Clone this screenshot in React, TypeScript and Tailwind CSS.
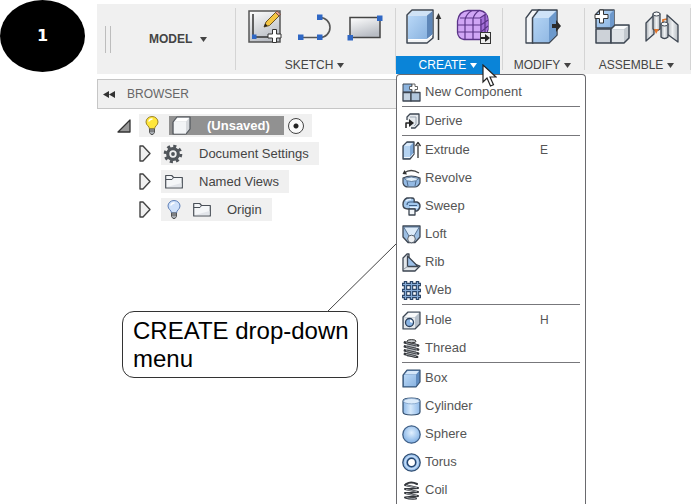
import React from "react";
import type { ReactNode } from "react";

function Gradients() {
  return (
    <svg className="absolute size-0" aria-hidden="true">
      <defs>
        <linearGradient id="blue" x1="0" y1="0" x2="1" y2="1">
          <stop offset="0" stopColor="#b9d8f7" />
          <stop offset="1" stopColor="#8ab3e0" />
        </linearGradient>
        <linearGradient id="sheet" x1="0" y1="0" x2="0.4" y2="1">
          <stop offset="0" stopColor="#ffffff" />
          <stop offset="1" stopColor="#b9bdc4" />
        </linearGradient>
        <linearGradient id="steel" x1="0" y1="0" x2="1" y2="0">
          <stop offset="0" stopColor="#aab0b6" />
          <stop offset="0.5" stopColor="#eef0f2" />
          <stop offset="1" stopColor="#b4bac0" />
        </linearGradient>
        <linearGradient id="tube" x1="0" y1="0" x2="1" y2="0">
          <stop offset="0" stopColor="#8db8e8" />
          <stop offset="0.45" stopColor="#d6e9fb" />
          <stop offset="1" stopColor="#8db8e8" />
        </linearGradient>
        <radialGradient id="ball" cx="0.5" cy="0.4" r="0.55">
          <stop offset="0" stopColor="#e2f1ff" />
          <stop offset="1" stopColor="#86b4e6" />
        </radialGradient>
      </defs>
    </svg>
  );
}

function Drawing({ size, children }: { size: "lg" | "sm"; children: ReactNode }) {
  return size === "lg" ? (
    <svg viewBox="0 0 36 36" className="size-9 shrink-0" fill="none" aria-hidden="true">
      {children}
    </svg>
  ) : (
    <svg viewBox="0 0 19 19" className="size-[19px] shrink-0" fill="none" strokeLinejoin="round" aria-hidden="true">
      {children}
    </svg>
  );
}

const ink = "#3d4652";

/* ---------- toolbar drawings ---------- */

const newSketch = (
  <Drawing size="lg">
    <rect x="2" y="2" width="31" height="31" fill="url(#sheet)" stroke="#555" strokeWidth="1.5" />
    <path d="M6 5v23h17" stroke="#333" strokeWidth="1.5" />
    <rect x="5" y="25.500" width="4.500" height="4.500" fill="#2f67c4" />
    <path d="M17 18l2-5L29 3l3.500 3.500-10 10z" fill="#f4c542" stroke="#6b5320" strokeLinejoin="round" />
    <path d="M28.500 3.500l1.500-1.500 3.500 3-1.500 2z" fill="#e7a08e" stroke="#7a5044" />
    <path d="M17 18l1.200-3.600 2.400 2.400z" fill="#222" />
    <path d="M25.500 20.500h4V25H34v4h-4.500v4.500h-4V29H21v-4h4.500z" fill="#fff" stroke="#333" />
  </Drawing>
);

const arcSketch = (
  <Drawing size="lg">
    <path d="M4 28.500h19A10 10 0 0 0 23 8.500" stroke="#555" strokeWidth="1.600" />
    <rect x="1" y="25.500" width="5.500" height="5.500" fill="#2f67c4" />
    <rect x="20" y="25.500" width="5.500" height="5.500" fill="#2f67c4" />
    <rect x="20" y="5.500" width="5.500" height="5.500" fill="#2f67c4" />
  </Drawing>
);

const rectSketch = (
  <Drawing size="lg">
    <rect x="3" y="8.500" width="30" height="20" fill="url(#sheet)" stroke="#444" strokeWidth="1.500" />
    <rect x="0.500" y="26" width="5.500" height="5.500" fill="#2f67c4" />
    <rect x="30" y="6.500" width="5.500" height="5.500" fill="#2f67c4" />
  </Drawing>
);

const extrudeLarge = (
  <Drawing size="lg">
    <path d="M1 34V6l5-5h21v28l-6 5z" fill="#f2f4f6" stroke={ink} strokeWidth="1.500" strokeLinejoin="round" />
    <path d="M2 30V6.500h19V30z" fill="url(#blue)" />
    <path d="M2 6.500L6.500 2H26l-5 4.500z" fill="#cfe2f5" />
    <path d="M21 6.500L26.500 2v23.500L21 30z" fill="#5d86b8" />
    <path d="M2 30.500h19l5.500-4.500" stroke="#fff" />
    <path d="M32.500 31V7" stroke="#333" strokeWidth="1.500" />
    <path d="M32.500 4l2.800 6h-5.600z" fill="#333" />
  </Drawing>
);

const formLarge = (
  <Drawing size="lg">
    <path d="M1.500 12Q3 2 12 1.500h12q7 1 8 9v10q-1 6-7 10H8q-6-1-6.500-7z" fill="#d0a5f5" stroke="#5b3488" strokeWidth="1.300" />
    <path d="M24 9l6-5 2 7v9l-8 10z" fill="#a470d8" />
    <path d="M1.500 16H25l7-5M1.500 23H25l7-6M4 9h20l6-4M9 30.500V11q1-6 7-9.500M17 30.500V10q1-5 6-8.500M25 30V10M29 27V6" stroke="#5b3488" strokeWidth="1.200" />
    <rect x="24.500" y="23.500" width="10" height="11" fill="#eee" stroke="#333" />
    <path d="M25 28h4v-3l5 4-5 4v-3h-4z" fill="#222" />
  </Drawing>
);

const pressPull = (
  <Drawing size="lg">
    <path d="M1 34V9l6-8h8L8 9v25z" fill="#f4f6f8" stroke={ink} strokeWidth="1.300" strokeLinejoin="round" />
    <path d="M7.500 34V9l6-8H32v25l-8 8z" fill="url(#blue)" stroke={ink} strokeWidth="1.500" strokeLinejoin="round" />
    <path d="M8.500 9L14 2h17l-7 7z" fill="#cfe3f8" />
    <path d="M24 9l7.300-7v24L24 33z" fill="#6c99cc" />
    <path d="M27 15h4v-4l5 6-5 6v-4h-4z" fill="#2b2b2b" />
  </Drawing>
);

const newComponentLarge = (
  <Drawing size="lg">
    <path d="M2 19V5l4-4h14v18z" fill="url(#blue)" stroke={ink} strokeWidth="1.500" strokeLinejoin="round" />
    <path d="M16 5l4-4v17h-4z" fill="#6d98cb" />
    <path d="M2 20h15v14H2z" fill="#cdd2d8" stroke={ink} strokeWidth="1.500" strokeLinejoin="round" />
    <path d="M17 20l4-4h14v13l-5 5H17z" fill="#c3c9cf" stroke={ink} strokeWidth="1.500" strokeLinejoin="round" />
    <path d="M18 20.500h12V33H18z" fill="#e0e4e8" />
    <path d="M18.500 20l3-3h12.500l-4 3z" fill="#fafbfc" />
    <path d="M5.500 1h4v4.500H14v4H9.500V14h-4V9.500H1v-4h4.500z" fill="#fff" stroke="#333" />
  </Drawing>
);

const jointLarge = (
  <Drawing size="lg">
    <path d="M2 14l8-8v19l-8 7z" fill="url(#steel)" stroke={ink} strokeWidth="1.300" strokeLinejoin="round" />
    <path d="M9 5q3.500-3 7 0v15q-3.500 3-7 0z" fill="url(#steel)" stroke={ink} strokeWidth="1.300" />
    <ellipse cx="12.500" cy="5" rx="3.500" ry="2" fill="#f6f7f8" stroke={ink} />
    <path d="M10 20h5l-3 5z" fill="#e2762c" />
    <path d="M19 16v-5l4-1" stroke="#e2762c" strokeWidth="1.800" />
    <path d="M23 6l11 10v17l-11-8z" fill="url(#steel)" stroke={ink} strokeWidth="1.300" strokeLinejoin="round" />
    <path d="M17 15q3.500-3 7 0v13q-3.500 3-7 0z" fill="url(#steel)" stroke={ink} strokeWidth="1.300" />
    <ellipse cx="20.500" cy="15" rx="3.500" ry="2" fill="#f6f7f8" stroke={ink} />
  </Drawing>
);

/* ---------- menu drawings ---------- */

const newComponent = (
  <Drawing size="sm">
    <path d="M1 1h9v8H1z" fill="#8db4de" stroke={ink} />
    <path d="M1 9.500h8v8.500H1z" fill="#c4d3e2" stroke={ink} strokeWidth="1.300" />
    <path d="M9 9.500h9V18H9z" fill="#b0c6dd" stroke={ink} strokeWidth="1.300" />
    <path d="M10 1h3v2.500h2.500v3H13V9h-3V6.500H7.500v-3H10z" fill="#fff" stroke="#555" strokeWidth="0.900" />
  </Drawing>
);

const derive = (
  <Drawing size="sm">
    <path d="M5 8V5l3-3h9v10l-4 4H9" fill="#e6eaee" stroke={ink} strokeWidth="1.300" />
    <path d="M8 5h6v7l-2 2" stroke="#9aa5b2" />
    <path d="M4 16v-5h3" stroke="#222" strokeWidth="1.500" />
    <path d="M7 7l5 4-5 4z" fill="#222" />
  </Drawing>
);

const extrude = (
  <Drawing size="sm">
    <path d="M1 18V5l4-4h7v12l-4 5H1z" fill="#7fa8d6" stroke={ink} strokeWidth="1.300" />
    <path d="M2 5h6v11H2z" fill="#b5d3f1" />
    <path d="M2 5l3-3h6L8 5z" fill="#dcecfb" />
    <path d="M2 16.500h6l3.500-4" stroke="#f2f6fa" />
    <path d="M16 17V4" stroke="#333" strokeWidth="1.300" />
    <path d="M13.500 5L16 1.500 18.500 5" stroke="#333" strokeWidth="1.300" />
  </Drawing>
);

const revolve = (
  <Drawing size="sm">
    <path d="M2 4Q9-1 17 4" stroke="#444" strokeWidth="1.400" />
    <path d="M0.500 5l4.500 0.500L2.500 1z" fill="#333" />
    <path d="M1 9q8-4 17 0v5q-2 4-5 4H6q-4 0-5-4z" fill="#94bae4" stroke={ink} strokeWidth="1.200" />
    <path d="M2 9.500q7-3 15 0-3 3-7.500 3T2 9.500z" fill="#e0effc" stroke="#4e6b8d" strokeWidth="0.800" />
    <path d="M5 12l1 5M14 12l-1 5" stroke="#4e6b8d" />
  </Drawing>
);

const sweep = (
  <Drawing size="sm">
    <path d="M5 1h5q3 0 2 4h3q3 1 3 4t-3 5h-2v-2H6Q1 12 1 7.500T5 1z" fill="#a3c8ed" stroke={ink} strokeWidth="1.400" />
    <path d="M12 5H8Q5 5 5 8M7 8.500h8" stroke="#3f5f86" strokeWidth="1.100" />
    <path d="M4 4q2-2 5-1.500M8 10.500h8" stroke="#e4f1ff" strokeWidth="1.500" />
    <path d="M7 12h6v6H7z" fill="#f1f5f9" stroke={ink} strokeWidth="1.300" />
  </Drawing>
);

const loft = (
  <Drawing size="sm">
    <path d="M1 1h17v11l-5 5.500H6L1 12z" fill="#9dbfe3" stroke={ink} strokeWidth="1.300" />
    <path d="M1.700 2h15.600L12 11H7z" fill="#dcebf9" stroke="#4e6b8d" strokeWidth="0.900" />
    <circle cx="9.500" cy="14" r="3.800" fill="#eceff2" stroke="#59626d" />
  </Drawing>
);

const rib = (
  <Drawing size="sm">
    <path d="M1 18V5l4-4h2v8l11 4-5 5z" fill="#e3e7eb" stroke={ink} strokeWidth="1.300" />
    <path d="M5.500 3v10.500H16z" fill="#9cc0e8" stroke={ink} strokeWidth="1.300" />
    <path d="M2 16l3.500-2.500" stroke="#8d97a2" />
  </Drawing>
);

const web = (
  <Drawing size="sm">
    <path d="M3.500 0v19M9.500 0v19M15.500 0v19M0 3.500h19M0 9.500h19M0 15.500h19" stroke="#2c4668" strokeWidth="3.400" />
    <path d="M3.500 1v17M9.500 1v17M15.500 1v17M1 3.500h17M1 9.500h17M1 15.500h17" stroke="#86abd6" strokeWidth="1.200" />
  </Drawing>
);

const hole = (
  <Drawing size="sm">
    <path d="M1 18V6l5-5h12v12l-5 5z" fill="#b5bfca" stroke={ink} strokeWidth="1.200" />
    <path d="M2 6.500h11V17H2z" fill="#e5e9ed" />
    <path d="M2.500 6L6.500 2h10.500l-4 4z" fill="#f8f9fa" />
    <circle cx="7.500" cy="11.500" r="4" fill="#8ab5e5" stroke="#2c3f58" strokeWidth="1.300" />
    <path d="M8 8.500a3 3 0 012.500 3.500L8 11z" fill="#fff" />
  </Drawing>
);

const thread = (
  <Drawing size="sm">
    <path d="M5 2h9v16H5z" fill="#b7bbc0" />
    <path d="M3 3.500l13 3M3 7.500l13 3M3 11.500l13 3M3 15l12 3" stroke="#34373c" strokeWidth="2.800" strokeLinecap="round" />
    <path d="M4 3.700l11 2.600M4 7.700l11 2.600M4 11.700l11 2.600M4 15.200l10 2.500" stroke="#a3a7ac" strokeWidth="0.900" />
    <ellipse cx="9.500" cy="2.200" rx="4.500" ry="1.600" fill="#c4c8cc" stroke="#333" />
  </Drawing>
);

const box = (
  <Drawing size="sm">
    <path d="M1 18V6l4-5h13v12l-4 5z" fill="#608cc0" stroke="#35506f" strokeWidth="1.200" />
    <path d="M2 6h12v11H2z" fill="url(#blue)" />
    <path d="M2.500 5.500L5.500 2h11.500L14 5.500z" fill="#d5e7f9" />
  </Drawing>
);

const cylinder = (
  <Drawing size="sm">
    <path d="M1 4q0-3 8.500-3T18 4v11q0 3-8.500 3T1 15z" fill="url(#tube)" stroke="#35506f" strokeWidth="1.200" />
    <ellipse cx="9.500" cy="4.200" rx="8" ry="2.700" fill="#dcebfa" stroke="#7d9fc6" strokeWidth="0.800" />
  </Drawing>
);

const sphere = (
  <Drawing size="sm">
    <circle cx="9.500" cy="9.500" r="8.700" fill="url(#ball)" stroke="#3f5f86" strokeWidth="1.300" />
  </Drawing>
);

const torus = (
  <Drawing size="sm">
    <circle cx="9.500" cy="9.500" r="8.700" fill="#94bdeb" stroke="#2f4c70" strokeWidth="1.300" />
    <circle cx="9.500" cy="9.500" r="6.300" stroke="#c2dbf6" strokeWidth="1.500" />
    <circle cx="9.500" cy="9.500" r="4.200" fill="#fff" stroke="#24456f" strokeWidth="1.500" />
  </Drawing>
);

const coil = (
  <Drawing size="sm">
    <path d="M4 3q5-3 11 0M3 4l13 3M16 7L3 8M3 8l13 3M16 11L3 12M3 12l13 3M16 15L3 16.500q5 1.500 11 1" stroke="#34373c" strokeWidth="2" strokeLinecap="round" />
    <path d="M4 4.300l11 2.500M4 8.300l11 2.500M4 12.300l11 2.500M4.500 16.500q4 1 9 1" stroke="#b7bbc0" strokeWidth="0.800" />
  </Drawing>
);

/* ---------- tree drawings ---------- */

function Bulb({ lit }: { lit: boolean }) {
  return (
    <svg viewBox="0 0 14 19" className="h-[19px] w-3.5 shrink-0" fill="none" aria-hidden="true">
      <path d="M4.500 13C4.500 10 1 9.500 1 6a6 5.500 0 0112 0c0 3.500-3.500 4-3.500 7z" fill={lit ? "#ffe63b" : "#cfe1fa"} stroke={lit ? "#9c8428" : "#5f80b8"} />
      <path d="M4 5q1-2 3-2" stroke="#fff" strokeWidth="1.500" strokeLinecap="round" />
      <path d="M4.500 13h5v3.500L8 18.500H6l-1.500-2z" fill="#a8adb3" stroke="#555" />
      <path d="M4.500 15h5" stroke="#555" />
    </svg>
  );
}

function Folder() {
  return (
    <svg viewBox="0 0 18 15" className="h-[15px] w-[18px] shrink-0" fill="none" aria-hidden="true">
      <path d="M0.700 14V1.500h6L8.500 3.500h8.800V14z" fill="#f4f6f8" stroke="#4a5058" strokeWidth="1.200" strokeLinejoin="round" />
      <path d="M1 5.500h6l1.500-2" stroke="#4a5058" />
      <path d="M2 13h14.500V9z" fill="#e2e5ea" />
    </svg>
  );
}

function Gear() {
  return (
    <svg viewBox="-10 -10 20 20" className="size-5 shrink-0" fill="none" aria-hidden="true">
      <circle r="7.800" stroke="#50555a" strokeWidth="3" strokeDasharray="3.063 3.063" />
      <circle r="5.300" stroke="#50555a" strokeWidth="3.200" />
      <circle r="1.900" fill="#50555a" />
    </svg>
  );
}

function Cube() {
  return (
    <svg viewBox="0 0 19 19" className="size-[19px] shrink-0" fill="none" aria-hidden="true">
      <path d="M1 18V6l4-5h13v12l-4 5z" fill="#d5d8dc" stroke="#50555b" strokeLinejoin="round" strokeWidth="1.200" />
      <path d="M2 6h12v11.500H2z" fill="#f2f4f6" />
      <path d="M2.500 5.500L5.500 2h11.500L14 5.500z" fill="#fff" />
    </svg>
  );
}

function Expander({ label }: { label: string }) {
  return (
    <button aria-label={`Expand ${label}`} aria-expanded="false" className="w-3 shrink-0">
      <svg viewBox="0 0 12 17" className="h-[17px] w-3" aria-hidden="true">
        <path d="M1 1h3l7 7.500L4 16H1z" fill="#f0f0f0" stroke="#444" strokeWidth="1.400" strokeLinejoin="round" />
      </svg>
    </button>
  );
}

/* ---------- layout ---------- */

function Caret() {
  return (
    <svg viewBox="0 0 7 5" className="h-[5px] w-[7px]" fill="currentColor" aria-hidden="true">
      <path d="M0 0h7L3.500 5z" />
    </svg>
  );
}

type Tool = { label: string; icon: ReactNode };

function ToolGroup({ name, tools, width, open, children }: { name: string; tools: Tool[]; width: string; open?: boolean; children?: ReactNode }) {
  return (
    <section className={`relative flex shrink-0 flex-col justify-between ${width}`}>
      <span className="absolute top-1 bottom-1 left-0 w-px bg-[#d4d4d4]" />
      <div className="flex justify-center gap-3.5 pt-[5px]">
        {tools.map((t) => (
          <button key={t.label} aria-label={t.label}>
            {t.icon}
          </button>
        ))}
      </div>
      <button
        aria-haspopup="menu"
        aria-expanded={!!open}
        className={`mr-0.5 ml-px flex h-[18px] items-center justify-center gap-1 text-xs ${open ? "bg-[#0a84d8] text-white" : "text-[#444]"}`}
      >
        {name}
        <Caret />
      </button>
      {children}
    </section>
  );
}

type Item = { label: string; icon: ReactNode; shortcut?: string };

const menuGroups: Item[][] = [
  [{ label: "New Component", icon: newComponent }],
  [{ label: "Derive", icon: derive }],
  [
    { label: "Extrude", icon: extrude, shortcut: "E" },
    { label: "Revolve", icon: revolve },
    { label: "Sweep", icon: sweep },
    { label: "Loft", icon: loft },
    { label: "Rib", icon: rib },
    { label: "Web", icon: web },
  ],
  [
    { label: "Hole", icon: hole, shortcut: "H" },
    { label: "Thread", icon: thread },
  ],
  [
    { label: "Box", icon: box },
    { label: "Cylinder", icon: cylinder },
    { label: "Sphere", icon: sphere },
    { label: "Torus", icon: torus },
    { label: "Coil", icon: coil },
  ],
];

function CreateMenu() {
  return (
    <div role="menu" className="absolute top-full left-px z-10 w-[190px] rounded-t border border-b-0 border-[#6a6a6e] bg-white px-[5px] pt-[3px] text-[13px] text-[#555]">
      {menuGroups.map((group, i) => (
        <div key={i} role="group" className={i === 0 ? "" : i > 2 ? "border-t border-[#77777b] pt-px" : "border-t border-[#77777b]"}>
          {group.map((item) => (
            <button key={item.label} role="menuitem" className="flex h-7 w-full items-center gap-1 text-left">
              {item.icon}
              <span className="flex-1">{item.label}</span>
              {item.shortcut && <kbd className="w-10 font-[inherit] text-xs">{item.shortcut}</kbd>}
            </button>
          ))}
        </div>
      ))}
    </div>
  );
}

function Pointer() {
  return (
    <svg viewBox="0 0 15 24" className="absolute top-[60px] left-[87px] z-20 h-6 w-[15px]" aria-hidden="true">
      <path d="M1 1v17l4-4 3.500 8 3-1.300L8 13h6z" fill="#fff" stroke="#222" strokeWidth="1.200" />
    </svg>
  );
}

function TreeRow({ label, children }: { label: string; children: ReactNode }) {
  return (
    <li className="flex h-[23px] items-center gap-2.5 pl-[22px]">
      <Expander label={label} />
      <div className="flex h-full items-center bg-[#f0f0f0] pr-2.5">
        {children}
        <span>{label}</span>
      </div>
    </li>
  );
}

export default function App() {
  return (
    <div className="flex min-h-screen bg-white font-['Liberation_Sans',Arial,sans-serif]">
      <Gradients />
      <aside className="w-[97px] shrink-0">
        <div className="flex h-[72px] w-[85px] items-center justify-center rounded-[50%] bg-black font-['DejaVu_Sans',sans-serif] text-base font-bold text-white">1</div>
      </aside>

      <div className="min-w-0 flex-1 pt-1">
        <header className="flex h-[70px] bg-[#f0f0f0]">
          <div className="flex w-[138px] shrink-0 items-center pl-2">
            <span className="h-[27px] w-1.5 border-x border-[#bdbdbd]" />
            <button className="ml-[38px] flex items-center gap-2 text-xs font-bold text-[#444]">
              MODEL
              <Caret />
            </button>
          </div>
          <ToolGroup
            name="SKETCH"
            width="w-40"
            tools={[
              { label: "Create sketch", icon: newSketch },
              { label: "Line", icon: arcSketch },
              { label: "Rectangle", icon: rectSketch },
            ]}
          />
          <ToolGroup
            name="CREATE"
            width="w-[107px]"
            open
            tools={[
              { label: "Extrude", icon: extrudeLarge },
              { label: "Create form", icon: formLarge },
            ]}
          >
            <CreateMenu />
            <Pointer />
          </ToolGroup>
          <ToolGroup name="MODIFY" width="w-[82px]" tools={[{ label: "Press pull", icon: pressPull }]} />
          <ToolGroup
            name="ASSEMBLE"
            width="w-[106px]"
            tools={[
              { label: "New component", icon: newComponentLarge },
              { label: "Joint", icon: jointLarge },
            ]}
          />
          <span className="my-1 w-px bg-[#d4d4d4]" />
        </header>

        <main className="mt-[5px] w-[300px] text-[13px] text-[#444]">
          <h2 className="flex h-[30px] items-center gap-3 border border-[#c6c6c6] bg-[#f0f0f0] pl-[5px] text-xs text-[#666]">
            <button aria-label="Collapse browser">
              <svg viewBox="0 0 12 7" className="h-[7px] w-3" fill="#333" aria-hidden="true">
                <path d="M6 0v7L0 3.500zM12 0v7L6 3.500z" />
              </svg>
            </button>
            BROWSER
          </h2>

          <ul className="mt-[5px] flex flex-col gap-[5px] pl-5">
            <li className="flex h-[23px] items-center gap-2">
              <button aria-label="Collapse (Unsaved)" aria-expanded="true">
                <svg viewBox="0 0 14 14" className="size-3.5" aria-hidden="true">
                  <path d="M13 1v12H1z" fill="#999" stroke="#333" strokeWidth="1.300" strokeLinejoin="round" />
                </svg>
              </button>
              <div className="flex h-full items-center bg-[#f0f0f0] pr-2 pl-1.5">
                <Bulb lit />
                <div className="mr-1 ml-2.5 flex h-[19px] items-center bg-[#919191] pr-3.5 pl-[3px] font-bold text-white">
                  <Cube />
                  <span className="ml-4">(Unsaved)</span>
                </div>
                <input
                  type="radio"
                  defaultChecked
                  aria-label="Activate (Unsaved)"
                  className="size-4 appearance-none rounded-full border border-[#444] bg-[radial-gradient(circle,#222_2px,#fafafa_3px)]"
                />
              </div>
            </li>
            <TreeRow label="Document Settings">
              <div className="mr-4 ml-0.5"><Gear /></div>
            </TreeRow>
            <TreeRow label="Named Views">
              <div className="mr-4 ml-1"><Folder /></div>
            </TreeRow>
            <TreeRow label="Origin">
              <div className="ml-1.5"><Bulb lit={false} /></div>
              <div className="mr-4 ml-3"><Folder /></div>
            </TreeRow>
          </ul>

          <div className="relative mt-[90px] ml-[25px] w-[236px] rounded-xl border border-[#333] bg-white pt-[5px] pb-1 pl-2.5 text-2xl leading-7 text-black">
            <svg viewBox="0 0 70 69" className="absolute bottom-full left-[204px] h-[69px] w-[70px]" aria-hidden="true">
              <path d="M0 69L70 0" stroke="#444" />
            </svg>
            CREATE drop-down menu
          </div>
        </main>
      </div>
    </div>
  );
}
